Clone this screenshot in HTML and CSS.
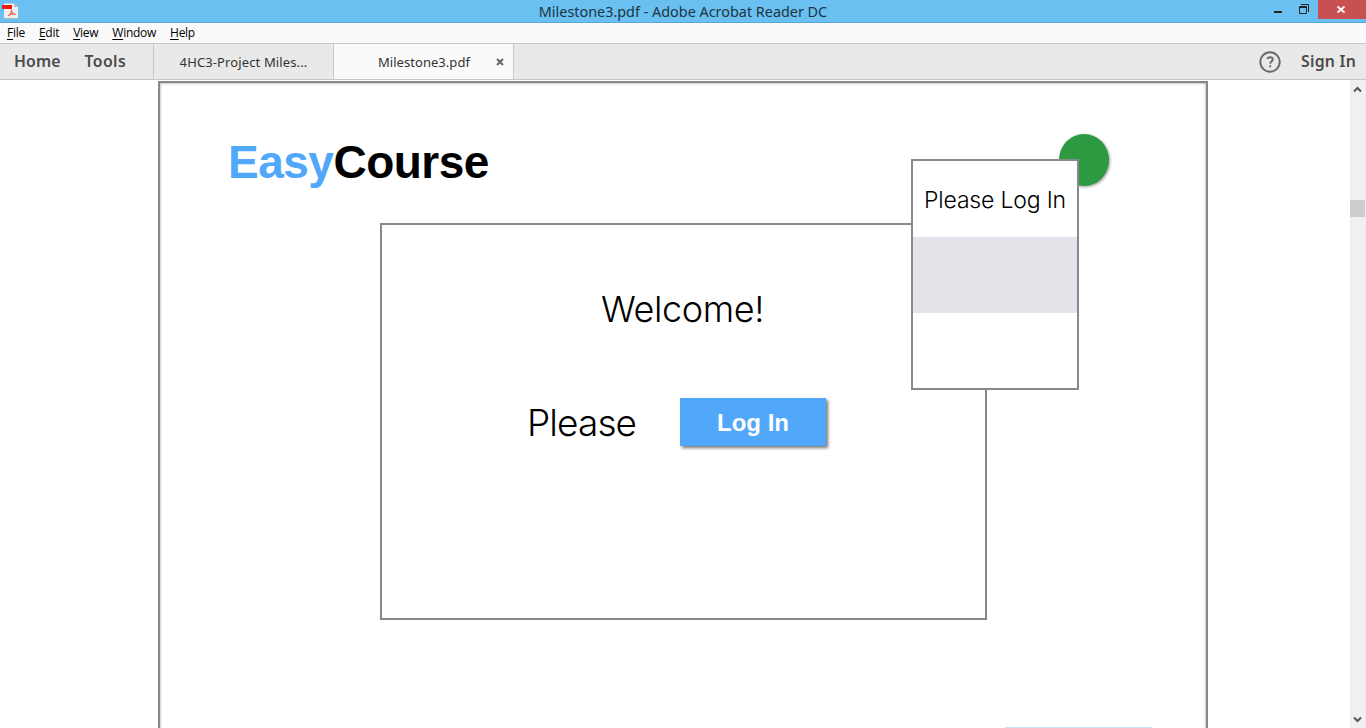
FILE: index.html
```html
<!DOCTYPE html>
<html lang="en">
<head>
<meta charset="utf-8">
<title>Milestone3.pdf - Adobe Acrobat Reader DC</title>
<link rel="stylesheet" href="styles.css">
</head>
<body>
<div class="window">
  <header class="titlebar">
    <svg class="app-icon" width="17" height="16" viewBox="0 0 17 16">
      <path d="M2 0.5H12L16 4V15.5H2Z" fill="#efefef"/>
      <path d="M12 0V4H16Z" fill="#b4bcc2"/>
      <path d="M2 15.5H16" stroke="#aeb6bb"/>
      <path d="M0 2H10V6H0Z" fill="#ee1c0c"/>
      <path d="M6 13C8.500 11.500 9.700 8.500 9.400 6.500C9.600 9.500 11 11.500 14 11.500C11 10.300 8.500 11 6 13" fill="none" stroke="#ee6a60" stroke-width="1.200"/>
    </svg>
    <h1 class="window-title">Milestone3.pdf - Adobe Acrobat Reader DC</h1>
    <div class="controls">
      <svg width="118" height="19" viewBox="0 0 118 19">
        <path d="M70 0H118V19H70Z" fill="#c75050"/>
        <path d="M26 11H34V13H26Z" fill="#222"/>
        <path d="M51.500 6.500H58.500V13.500H51.500ZM51 7.500H59M53 4.500H60.500V12" fill="none" stroke="#222"/>
        <path d="M89.500 6.500L96.500 12.500M96.500 6.500L89.500 12.500" stroke="#fff" stroke-width="1.700"/>
      </svg>
    </div>
  </header>
  <nav class="menubar">
    <span><u>F</u>ile</span><span><u>E</u>dit</span><span><u>V</u>iew</span><span><u>W</u>indow</span><span><u>H</u>elp</span>
  </nav>
  <div class="tabs">
    <div class="primary"><span>Home</span><span class="tools">Tools</span></div>
    <div class="tab">4HC3-Project Miles...</div>
    <div class="tab active"><span>Milestone3.pdf</span>
      <svg class="close" width="8" height="8" viewBox="0 0 8 8"><path d="M1 1L7 7M7 1L1 7" stroke="#666" stroke-width="2"/></svg>
    </div>
    <div class="account">
      <svg width="22" height="22" viewBox="0 0 22 22" fill="none" stroke="#696969">
        <circle cx="11" cy="11" r="9.700" stroke-width="1.900"/>
        <path d="M8.300 8C8.600 6.600 9.700 6.200 11 6.200C12.700 6.200 13.700 7.100 13.700 8.500C13.700 10.600 11.200 10.500 11.200 12.800M11.200 14.300V16.300" stroke-width="1.900"/>
      </svg>
      <span>Sign In</span>
    </div>
  </div>
  <main class="viewer">
    <section class="sheet">
      <div class="logo"><span class="easy">Easy</span>Course</div>
      <div class="card">
        <div class="welcome">Welcome!</div>
        <div class="login-row"><span class="please">Please</span><button class="login">Log In</button></div>
      </div>
      <div class="next"></div>
      <div class="avatar"></div>
      <aside class="popup">
        <div class="popup-title">Please Log In</div>
        <div class="popup-band"></div>
      </aside>
    </section>
    <div class="scrollbar">
      <svg width="16" height="16" viewBox="0 0 16 16"><path d="M4 11.500L7.500 8L11 11.500" fill="none" stroke="#555" stroke-width="2"/></svg>
      <div class="thumb"></div>
      <svg class="down" width="16" height="16" viewBox="0 0 16 16"><path d="M4 5.500L7.500 9L11 5.500" fill="none" stroke="#555" stroke-width="2"/></svg>
    </div>
  </main>
</div>
</body>
</html>
```
FILE: styles.css
```css
* { box-sizing: border-box; }
body { margin: 0; overflow: hidden; font-family: "Noto Sans", sans-serif; background: #fff; }
.window { width: 1366px; height: 728px; display: flex; flex-direction: column; white-space: nowrap; }
.titlebar { height: 23px; flex: none; display: grid; grid-template-columns: 118px 1fr 118px; background: #69c0f1; border-bottom: 1px solid #5aa7d3; }
.app-icon { margin: 3px 0 0 2px; }
.window-title { margin: 0; text-align: center; font-size: 14.4px; font-weight: 400; line-height: 23px; color: #1e3442; }
.controls { height: 19px; }
.controls svg, .scrollbar svg { display: block; }
.menubar { height: 20px; flex: none; display: flex; gap: 14px; padding-left: 7px; background: #fafafa; font-family: "Open Sans", sans-serif; font-size: 12px; line-height: 20px; letter-spacing: -0.27px; color: #000; }
.menubar u { text-underline-offset: 2px; }
.tabs { height: 37px; flex: none; display: flex; background: #e9e9e9; border-top: 1px solid #c8c8c8; border-bottom: 1px solid #c8c8c8; line-height: 37px; color: #4b4b4b; }
.primary { width: 153px; display: flex; gap: 24px; padding-left: 14px; font-size: 15.8px; font-weight: 600; line-height: 35px; letter-spacing: 0.1px; }
.tools { letter-spacing: 0.4px; }
.tab { width: 180px; border-left: 1px solid #c8c8c8; text-align: center; font-size: 13px; letter-spacing: 0.12px; color: #333; }
.active { width: 181px; display: flex; align-items: center; justify-content: flex-end; gap: 26px; padding-right: 9px; background: #fafafa; border-right: 1px solid #c8c8c8; letter-spacing: 0.05px; }
.active span { line-height: 38px; padding-top: 1px; }
.account { margin-left: auto; padding-right: 10px; display: flex; align-items: center; gap: 20px; font-size: 15.8px; font-weight: 600; letter-spacing: 0.26px; }
.account span { line-height: 35px; }
.viewer { flex: 1; display: flex; min-height: 0; overflow: hidden; background: #fff; }
.sheet { position: relative; width: 1050px; margin: 1px 0 -6px 158px; padding: 54px 0 0 220px; border: 2px solid #888; box-shadow: inset 0 0 2px 1px #ccc; font-family: "Liberation Sans", Arial, sans-serif; display: flex; flex-direction: column; }
.logo { margin-left: -152px; height: 51px; font-size: 46px; line-height: 51px; font-weight: 700; letter-spacing: -0.5px; color: #000; }
.easy { color: #51a7f9; }
.card { margin-top: 35px; width: 607px; height: 397px; flex: none; border: 2px solid #88888b; padding-top: 60px; font-family: Inter, sans-serif; font-weight: 300; color: #000; }
.welcome { text-align: center; font-size: 36px; line-height: 48px; letter-spacing: -0.4px; padding-right: 2px; }
.login-row { display: flex; align-items: center; margin: 64px 0 0 145px; }
.please { width: 153px; font-size: 37px; line-height: 52px; letter-spacing: -0.9px; }
.login { width: 146px; height: 48px; margin-bottom: 3px; padding: 2px 0 0; border: 0; background: #51a7f9; color: #fff; box-shadow: 2px 2px 3px #777; font: 700 24px "Liberation Sans", Arial, sans-serif; }
.next { margin: auto 0 4px 625px; width: 147px; height: 1px; flex: none; background: #c1e5f2; }
.avatar { position: absolute; left: 899px; top: 51px; width: 50px; height: 52px; border-radius: 50%; background: #2d9a42; box-shadow: 1px 1px 3px #999; }
.popup { position: absolute; left: 751px; top: 76px; width: 168px; height: 231px; border: 2px solid #88898d; background: #fff; }
.popup-title { height: 76px; text-align: center; line-height: 78px; font-family: Inter, sans-serif; font-size: 23px; font-weight: 300; letter-spacing: -0.18px; color: #000; }
.popup-band { height: 76px; background: #e3e4e9; }
.scrollbar { width: 16px; margin-left: auto; background: #f0f0f0; display: flex; flex-direction: column; }
.thumb { width: 15px; height: 17px; margin-top: 104px; background: #cdcdcd; }
.down { margin-top: auto; }
```
